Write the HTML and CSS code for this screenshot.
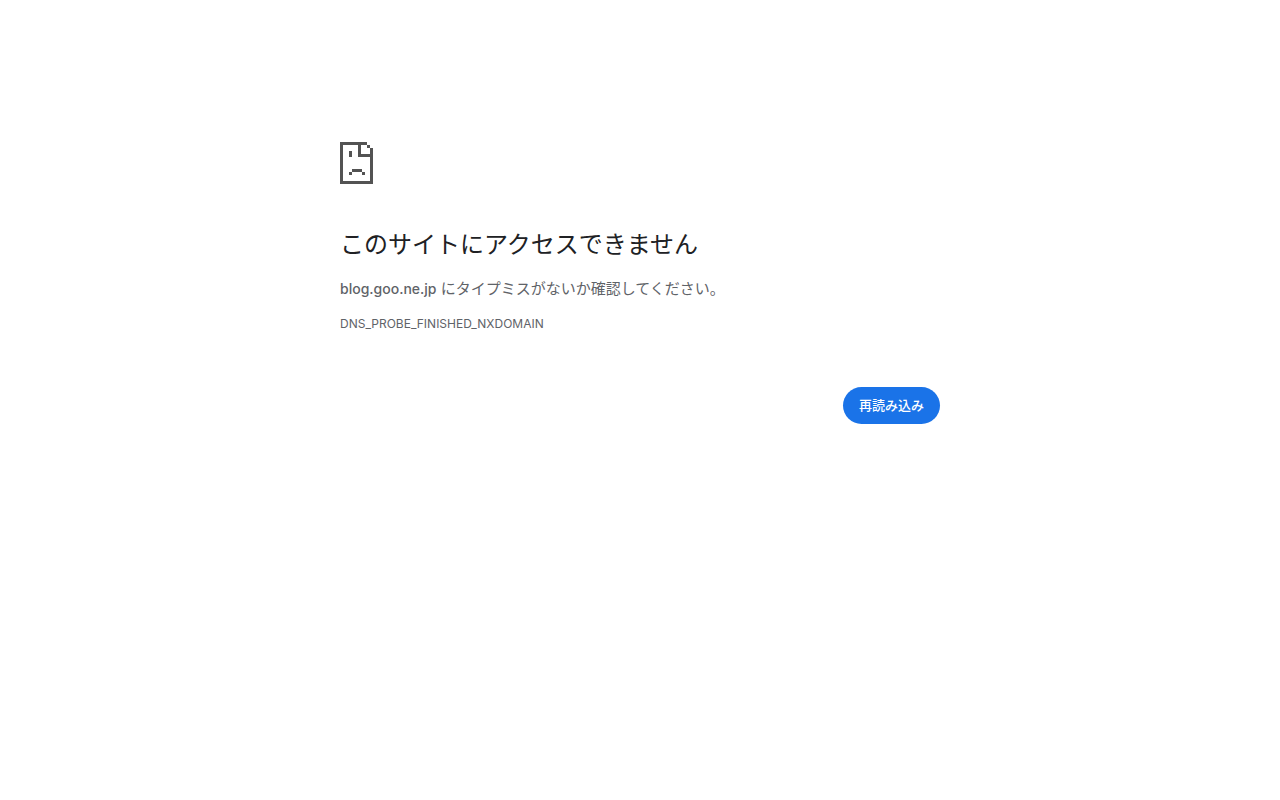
FILE: index.html
```html
<!DOCTYPE html>
<html lang="ja">
<head>
<meta charset="utf-8">
<meta name="viewport" content="width=device-width, initial-scale=1">
<title>blog.goo.ne.jp</title>
<link rel="stylesheet" href="styles.css">
</head>
<body>
<main class="error">
  <svg class="error-icon" viewBox="0 0 33 42" shape-rendering="crispEdges" aria-hidden="true">
    <path fill="currentColor" d="M0 0h27v3h3v3h3v36H0zM3 3v36h27V15H18V3zM21 3v9h9V6h-3V3zM9 9h3v6H9zM12 27h10v3H12zM9 30h3v3H9zM22 30h3v3h-3z" fill-rule="evenodd"/>
  </svg>
  <h1 class="title">このサイトにアクセスできません</h1>
  <p class="message"><span class="host">blog.goo.ne.jp</span> にタイプミスがないか確認してください。</p>
  <p class="code">DNS_PROBE_FINISHED_NXDOMAIN</p>
  <div class="actions">
    <button class="reload" type="button">再読み込み</button>
  </div>
</main>
</body>
</html>
```
FILE: styles.css
```css
body {
  margin: 0;
  background: #fff;
  color: #5f6368;
  font-family: Inter, "Noto Sans CJK JP", sans-serif;
  font-size: 15px;
  line-height: 24px;
}

.error {
  box-sizing: border-box;
  max-width: 600px;
  margin: 0 auto;
  padding-top: 142px;
}

.error-icon {
  display: block;
  width: 33px;
  height: 42px;
  color: #535353;
}

.title {
  margin: 46px 0 17px;
  color: #202124;
  font-size: 24px;
  font-weight: 400;
  line-height: 30px;
}

.message {
  margin: 0;
}

.host {
  font-size: 14px;
  font-weight: 500;
}

.code {
  margin: 13px 0 0;
  font-size: 12px;
  line-height: 20px;
}

.actions {
  display: flex;
  justify-content: flex-end;
  margin-top: 53px;
}

.reload {
  padding: 8px 16px;
  border: 0;
  border-radius: 20px;
  background: #1a73e8;
  color: #fff;
  font-family: inherit;
  font-size: 13px;
  font-weight: 500;
  line-height: 21px;
  cursor: pointer;
}
```
